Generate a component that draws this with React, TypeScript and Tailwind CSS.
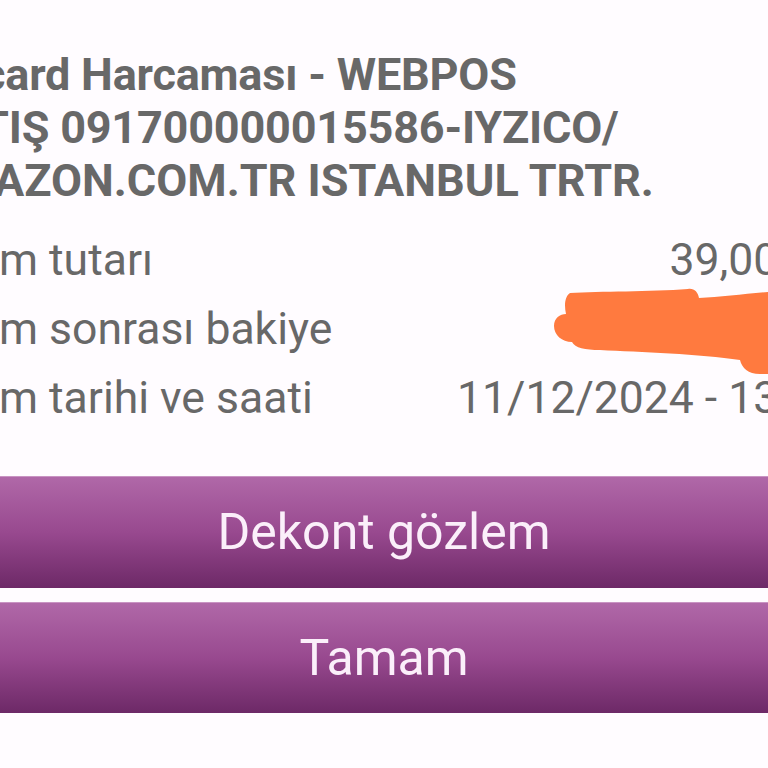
export default function App() {
  const rows = [
    { label: "m tutarı", value: "39,00 TL" },
    { label: "m sonrası bakiye", value: "" },
    { label: "m tarihi ve saati", value: "11/12/2024 - 13:45" },
  ];

  return (
    <div className="relative w-[768px] h-[768px] overflow-hidden bg-[#fffcff] font-['Roboto',sans-serif] text-[#686868]">
      <div className="pt-[48px] font-bold text-[45px] leading-[53px] whitespace-nowrap">
        <p className="-ml-[18px] tracking-[-0.2px]">card Harcaması - WEBPOS</p>
        <p className="-ml-[19px] tracking-[-0.2px]">TIŞ 091700000015586-IYZICO/</p>
        <p className="-ml-[6px]">AZON.COM.TR ISTANBUL TRTR.</p>
      </div>

      <div className="mt-[19px] w-[839px] text-[44.5px] whitespace-nowrap">
        {rows.map((r) => (
          <div key={r.label} className="flex justify-between items-center h-[69px]">
            <span className="-ml-[1px]">{r.label}</span>
            <span>{r.value}</span>
          </div>
        ))}
      </div>

      {/* redaction scribble over the balance */}
      <svg
        className="absolute left-[540px] top-[280px]"
        width="240"
        height="100"
        viewBox="0 0 240 100"
      >
        <path
          d="M 30 13 C 60 11, 110 12, 148 9 C 154 8, 158 12, 159 18 C 180 17, 205 14, 228 12 L 235 12 L 235 94 L 220 94 C 208 94, 202 88, 200 80 C 160 74, 100 72, 60 70 C 45 70, 35 68, 32 62 C 22 62, 14 55, 14 46 C 14 38, 20 34, 26 34 C 24 25, 25 16, 30 13 Z"
          fill="#ff7a3f"
        />
      </svg>

      <div className="mt-[43px] flex flex-col gap-[14px]">
        <button className="h-[112px] w-full border-t border-[#c994c3] bg-gradient-to-b from-[#b068a8] via-[#98498f] to-[#6d2967] text-[50px] text-[#fbeffa]">
          Dekont gözlem
        </button>
        <button className="h-[111px] w-full border-t border-[#c994c3] bg-gradient-to-b from-[#b068a8] via-[#98498f] to-[#6d2967] text-[50px] text-[#fbeffa]">
          Tamam
        </button>
      </div>
    </div>
  );
}
